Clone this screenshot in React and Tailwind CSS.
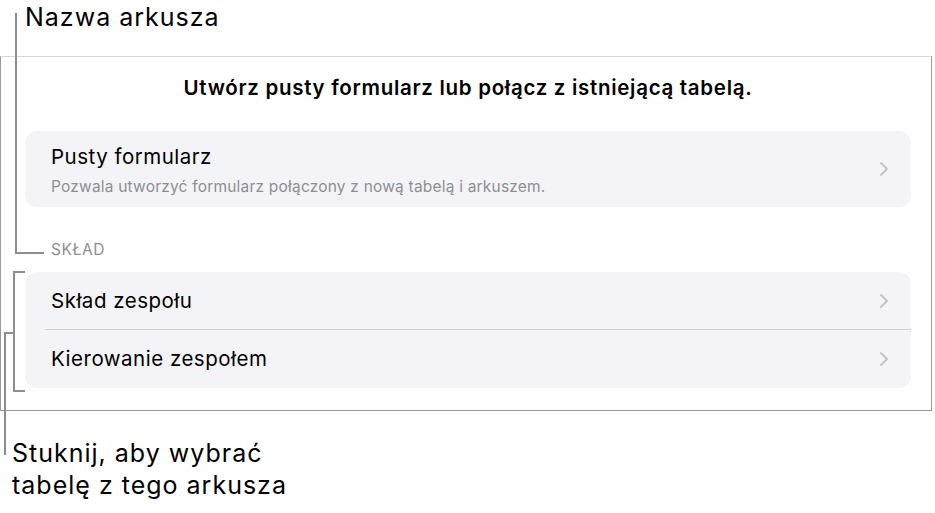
import React from 'react';

function Chevron() {
  return (
    <svg width="10" height="16" viewBox="0 0 10 16" className="shrink-0">
      <path d="M2 2l6 6-6 6" fill="none" stroke="#c4c4c7" strokeWidth="2" strokeLinecap="round" strokeLinejoin="round" />
    </svg>
  );
}

function Callouts() {
  return (
    <svg className="absolute inset-0 pointer-events-none" width="935" height="513">
      <g fill="none" stroke="#8e8e8e" strokeWidth="2">
        <path d="M16 13V253H44" />
        <path d="M25 272H14V391H25" />
        <path d="M14 333H5V455" />
      </g>
    </svg>
  );
}

export default function App() {
  return (
    <div className="relative w-[935px] h-[513px] bg-white overflow-hidden font-['Inter','Liberation_Sans',sans-serif] text-black">
      <div className="h-[56px] pl-[25px] pt-[1px] text-[25px] leading-[32px] tracking-[1px]">Nazwa arkusza</div>

      <div className="w-[932px] h-[355px] border-t border-t-[#d8d8d8] border-x border-b border-x-[#9a9a9a] border-b-[#9a9a9a] pl-[24px] pr-[20px]">
        <h1 className="pt-[18px] text-center font-semibold text-[20.5px] leading-[26px] tracking-[0.7px]">
          Utwórz pusty formularz lub połącz z istniejącą tabelą.
        </h1>

        <div className="mt-[30px] h-[76px] rounded-[12px] bg-[#f4f4f8] pl-[26px] pr-[22px] flex items-center justify-between">
          <div className="pt-[2px]">
            <div className="text-[20.5px] leading-[26px] tracking-[0.5px]">Pusty formularz</div>
            <div className="mt-[7px] text-[15.5px] leading-[20px] tracking-[0.2px] text-[#8e8e93]">
              Pozwala utworzyć formularz połączony z nową tabelą i arkuszem.
            </div>
          </div>
          <Chevron />
        </div>

        <div className="mt-[33px] pl-[26px] text-[15.5px] leading-[20px] text-[#8e8e93] tracking-[0.5px]">SKŁAD</div>

        <div className="mt-[12px] rounded-[12px] bg-[#f4f4f8]">
          <div className="h-[58px] ml-[20px] pl-[6px] pr-[22px] flex items-center justify-between border-b border-[#cfcfd3]">
            <span className="text-[20.5px] leading-[26px] tracking-[0.5px]">Skład zespołu</span>
            <Chevron />
          </div>
          <div className="h-[58px] ml-[20px] pl-[6px] pr-[22px] flex items-center justify-between">
            <span className="text-[20.5px] leading-[26px] tracking-[0.5px]">Kierowanie zespołem</span>
            <Chevron />
          </div>
        </div>
      </div>

      <div className="mt-[26px] pl-[12px] text-[25px] leading-[32px] tracking-[1px]">
        <div>Stuknij, aby wybrać</div>
        <div>tabelę z tego arkusza</div>
      </div>

      <Callouts />
    </div>
  );
}
